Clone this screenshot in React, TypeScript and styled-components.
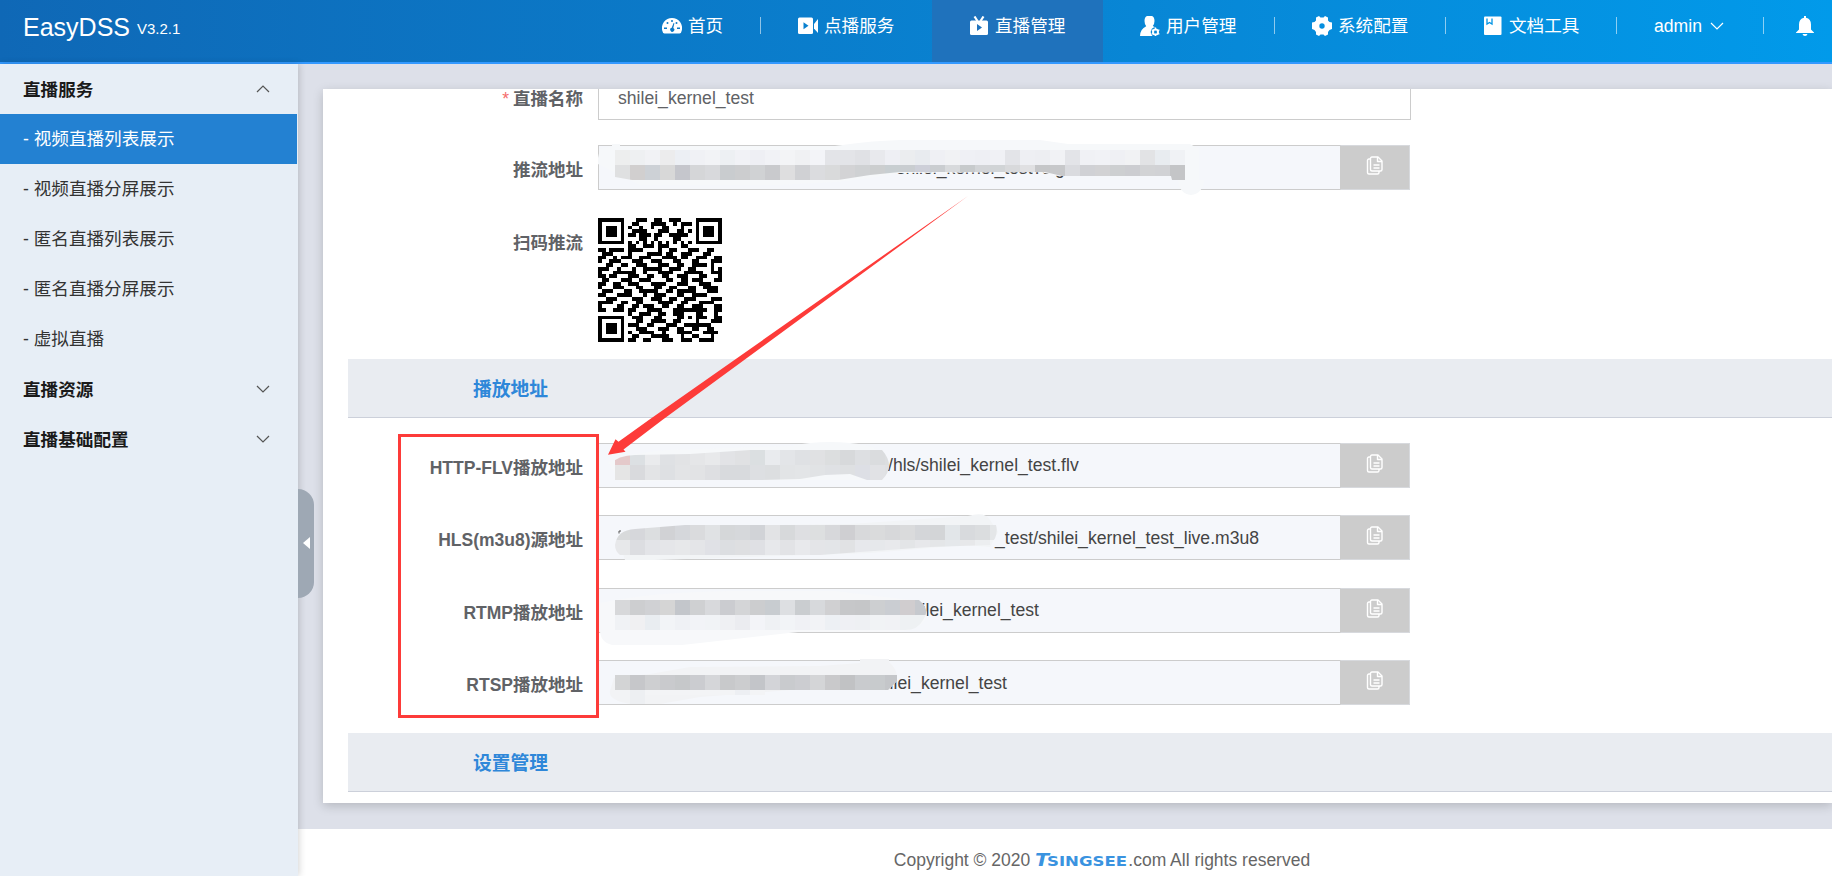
import React from 'react';
import styled, { createGlobalStyle } from 'styled-components';

const Global = createGlobalStyle`
  * { box-sizing: border-box; }
  html, body { margin: 0; height: 100%; overflow: hidden; }
  body {
    font-family: "Liberation Sans", "Noto Sans CJK SC", sans-serif;
    font-size: 17.6px;
    color: #333;
  }
`;

const Page = styled.div`
  position: relative;
  display: flex;
  flex-direction: column;
  height: 876px;
  overflow: hidden;
  background: #dde0e9;
`;

const Header = styled.header`
  display: flex;
  height: 64px;
  flex: none;
  color: #fff;
  background: linear-gradient(to right, #0f68b6, #0886d5 62%, #019aea);
  border-bottom: 2px solid #3399ff;
`;

const Brand = styled.div`
  display: flex;
  align-items: center;
  gap: 7px;
  height: 55px;
  padding-left: 23px;
  width: 625px;
  font-size: 25px;
`;

const Version = styled.span`
  padding-top: 1px;
  font-size: 15px;
`;

const Nav = styled.nav`
  display: flex;
`;

const NavItem = styled.div<{ $w: number; $active?: boolean; $pad?: number; $gap?: number }>`
  display: flex;
  align-items: center;
  gap: ${p => p.$gap ?? 6}px;
  width: ${p => p.$w}px;
  height: 62px;
  padding: 0 0 10px ${p => p.$pad ?? 37}px;
  background: ${p => (p.$active ? '#1f72bc' : 'transparent')};
  white-space: nowrap;
  line-height: 26px;
`;

const Divider = styled.i`
  width: 1px;
  height: 17px;
  margin: 17px 0 0 -1px;
  background: rgba(255, 255, 255, 0.55);
`;

const NavIcon = styled.svg`
  width: 20px;
  height: 20px;
  flex: none;
  fill: #fff;
`;

const Body = styled.div`
  display: flex;
  flex: 1;
  min-height: 0;
`;

const Sidebar = styled.aside`
  position: relative;
  z-index: 1;
  width: 298px;
  flex: none;
  background: #e7eef6;
  box-shadow: 1px 0 7px rgba(0, 0, 0, 0.18);
`;

const MenuTitle = styled.div`
  display: flex;
  align-items: center;
  justify-content: space-between;
  height: 50px;
  padding: 0 28px 1px 23px;
  font-weight: 700;
  color: #1a1a1a;
`;

const MenuItem = styled.div<{ $active?: boolean }>`
  height: 50px;
  width: 297px;
  padding-left: 23px;
  line-height: 51px;
  color: ${p => (p.$active ? '#fff' : '#333')};
  background: ${p => (p.$active ? '#2381d2' : 'transparent')};
`;

const Collapse = styled.div`
  position: absolute;
  left: 298px;
  top: 425px;
  display: flex;
  align-items: center;
  justify-content: center;
  width: 16px;
  height: 109px;
  padding-bottom: 2px;
  border-radius: 0 16px 16px 0;
  background: #9ea8b4;
`;

const Main = styled.main`
  display: flex;
  flex-direction: column;
  flex: 1;
  min-width: 0;
`;

const Card = styled.section`
  height: 714px;
  margin: 25px 0 26px 25px;
  padding-left: 25px;
  background: #fff;
  box-shadow: 0 3px 10px rgba(0, 0, 0, 0.18);
  flex: none;
`;

const Scroller = styled.div`
  display: flex;
  flex-direction: column;
  height: 714px;
  overflow: hidden;
`;

const FormRow = styled.div<{ $top: number; $h?: number }>`
  display: flex;
  flex: none;
  height: ${p => p.$h ?? 45}px;
  margin-top: ${p => p.$top}px;
`;

const Label = styled.label<{ $required?: boolean }>`
  width: 250px;
  padding-right: 15px;
  line-height: ${p => (p.$required ? 48 : 50)}px;
  text-align: right;
  font-size: 17.5px;
  font-weight: 700;
  color: #606266;
  white-space: nowrap;
  &::before {
    content: ${p => (p.$required ? '"*"' : 'none')};
    margin-right: 4px;
    font-weight: 400;
    color: #f56c6c;
  }
`;

const Input = styled.div<{ $readonly?: boolean; $indent?: number; $line?: number }>`
  width: ${p => (p.$readonly ? 742 : 813)}px;
  height: 45px;
  border: 1px solid #ccc;
  border-right-width: ${p => (p.$readonly ? 0 : 1)}px;
  padding-left: ${p => p.$indent ?? 19}px;
  line-height: ${p => p.$line ?? 45}px;
  color: ${p => (p.$readonly ? '#444' : '#606266')};
  background: ${p => (p.$readonly ? '#f5f7fb' : '#fff')};
  white-space: nowrap;
`;

const CopyButton = styled.div`
  display: flex;
  justify-content: center;
  width: 70px;
  height: 45px;
  padding-top: 10px;
  border: 1px solid #d7d9dd;
  border-left-color: #ccc;
  background: #ccc;
`;

const SectionTitle = styled.h3<{ $top: number }>`
  flex: none;
  height: 59px;
  margin: ${p => p.$top}px 0 0;
  padding-left: 125px;
  border-bottom: 1px solid #ccd0da;
  line-height: 61px;
  font-size: 18.8px;
  color: #2e87d9;
  background: #e9ecf1;
`;

const Footer = styled.footer`
  display: flex;
  align-items: center;
  justify-content: center;
  flex: 1;
  padding: 15px 0 0 74px;
  font-size: 17.5px;
  color: #666;
  background: #fff;
  white-space: nowrap;
`;

const Logo = styled.svg`
  width: 93px;
  height: 16px;
  margin: 0 0 1px 5px;
  overflow: visible;
`;

const Overlay = styled.svg`
  position: absolute;
  left: 0;
  top: 0;
  z-index: 2;
  pointer-events: none;
`;

const Chevron = ({ up, color = '#555' }: { up?: boolean; color?: string }) => (
  <svg width="14" height="8" viewBox="0 0 14 8" fill="none" stroke={color} strokeWidth="1.2">
    <path d={up ? 'M1 7l6-6 6 6' : 'M1 1l6 6 6-6'} />
  </svg>
);

const CopyIcon = () => (
  <svg width="18" height="20" viewBox="0 0 18 20" fill="none" stroke="#fff" strokeWidth="1.400" strokeLinejoin="round">
    <path d="M4.500 2.500Q4.500 1 6 1H12L16 5V13.500Q16 15 14.500 15H6Q4.500 15 4.500 13.500Z" />
    <path d="M11.500 1V5.500H16M7.500 9H13.500M7.500 12H13.500" />
    <path d="M4.500 3H3Q1.500 3 1.500 4.500V16.500Q1.500 18 3 18H11.500Q13 18 13 16.500V15" />
  </svg>
);

const GaugeIcon = () => (
  <NavIcon viewBox="0 0 20 20">
    <path d="M10 2a10 10 0 0 0-9.600 13Q.8 17.500 2.500 17.500H17.500Q19.200 17.500 19.600 15A10 10 0 0 0 10 2Z" />
    <g fill="#0b79c6">
      <circle cx="10" cy="5" r="1" /><circle cx="5.500" cy="7" r="1" /><circle cx="14.500" cy="7" r="1" />
      <rect x="2" y="11.500" width="3" height="1.500" /><rect x="15" y="11.500" width="3" height="1.500" />
      <path d="M11.600 7L12.400 7.300L11.300 12A2 2 0 1 1 9.700 11.800Z" />
    </g>
  </NavIcon>
);

const VideoIcon = () => (
  <NavIcon viewBox="0 0 20 20">
    <rect x="0" y="1.500" width="15" height="16.500" rx="1.500" />
    <path d="M16 8L20 3V17L16 12.500Z" />
    <path d="M5.500 6.200L10.500 9.700L5.500 13.200Z" fill="#0980cf" />
  </NavIcon>
);

const TvIcon = () => (
  <NavIcon viewBox="0 0 20 20">
    <rect x="1" y="4.500" width="18" height="14.500" rx="1.500" />
    <path d="M5.500 .5L8.500 5M14.500 .5L11.500 5" stroke="#fff" strokeWidth="2.200" />
    <path d="M8 8L13 11.500L8 15Z" fill="#1f72bc" />
  </NavIcon>
);

const UserIcon = () => (
  <NavIcon viewBox="0 0 20 20">
    <path d="M9.500 -.5Q14.500 -.5 14.500 5Q14.500 8 12.800 10Q16 11 17 14L15 20.500H0Q0 13 6.200 10.200Q4.500 8 4.500 5Q4.500 -.5 9.500 -.5Z" />
    <circle cx="15.500" cy="16" r="4.800" fill="#0787d6" />
    <circle cx="15.500" cy="16" r="2.600" fill="none" stroke="#fff" strokeWidth="1.800" />
    <path d="M15.500 11.500V20.500M11.600 13.700L19.400 18.300M11.600 18.300L19.400 13.700" stroke="#fff" strokeWidth="1.300" />
    <circle cx="15.500" cy="16" r="1.500" fill="#0787d6" />
  </NavIcon>
);

const GearIcon = () => (
  <NavIcon viewBox="0 0 20 20">
    <path d="M4 1.500L7 0L8.500 1.500H11.500L13 0L16 1.500V4.500L17.500 6L20 6.500V13L17.500 14L16 16V18.500L13 20L11.500 18.500H8.500L7 20L4 18.500V16L2.500 14L0 13V6.500L2.500 6L4 4.500Z" />
    <circle cx="10" cy="10" r="2.700" fill="#058fdf" />
  </NavIcon>
);

const BookIcon = () => (
  <NavIcon viewBox="0 0 20 20">
    <rect x="1" y=".5" width="17.500" height="18.500" rx="1" />
    <path d="M4 2.500V8L6.500 6.500L9 8V2.500" fill="none" stroke="#0394e4" strokeWidth="1.300" />
  </NavIcon>
);

const BellIcon = () => (
  <NavIcon viewBox="0 0 20 20">
    <path d="M9 0H11V1.800Q16 3 16 8.500V13.500L19 16.500V17H1V16.500L4 13.500V8.500Q4 3 9 1.800ZM7.500 18H12.500Q12 20 10 20Q8 20 7.500 18Z" />
  </NavIcon>
);

const QR_ROWS = [
  '111111100011100110011100001111111',
  '100000100110001111001011101000001',
  '101110101001001001100010001011101',
  '101110100111100011100110101011101',
  '101110101101110110011111001011101',
  '100000100001100100001100001000001',
  '111111101010101010101010101111111',
  '000000001100111011100011000000000',
  '110111101111000010011000111001100',
  '011100001000011110110011100011000',
  '110010111001110001111011001110011',
  '100111000111001110001100011000111',
  '001100110011100011100110011110100',
  '111001000100111110011100110000101',
  '100011111100100011110001111100111',
  '110110001110011001100111000110001',
  '011000111001110000110011011100011',
  '110011001110001111000111000111000',
  '100011100011000110011000110011110',
  '011100011001111100110111110001110',
  '110001111000100111000110011110000',
  '001110000111001110011001110000111',
  '111100110011000011110011000111100',
  '100001100110111001100110011100011',
  '110011101100011110001111111110011',
  '000000001001110011001110001100010',
  '111111100111000110000110101110011',
  '100000100011001111001100001000111',
  '101110101110011000111001111111000',
  '101110100011100011100110011001100',
  '101110101001111001000111100011110',
  '100000100110001111100010011000100',
  '111111101100110001110011100111100',
];

const QrCode = () => (
  <svg width="124" height="124" viewBox="0 0 33 33" shapeRendering="crispEdges">
    {QR_ROWS.map((row, y) =>
      row.split('').map((c, x) => (c === '1' ? <rect key={`${x}-${y}`} x={x} y={y} width="1" height="1" /> : null))
    )}
  </svg>
);

type MosaicProps = { id: string; wash: string; washColor?: string; clip: string; rows: { y: number; colors: string }[] };

const Mosaic = ({ id, wash, washColor = '#f6f8fa', clip, rows }: MosaicProps) => (
  <g>
    <path d={wash} fill={washColor} />
    <clipPath id={id}><path d={clip} /></clipPath>
    <g clipPath={`url(#${id})`} shapeRendering="crispEdges">
      {rows.map(r =>
        r.colors.split(' ').map((c, i) => (
          <rect key={`${r.y}-${i}`} x={615 + i * 15} y={r.y} width="15" height="15" fill={`#${c}`} />
        ))
      )}
    </g>
  </g>
);

const Mosaics = () => (
  <>
    <Mosaic
      id="m-push"
      wash="M600 149L612 146V144H620V146H835L850 144Q870 141 900 140H1040L1068 144H1190L1199 149V180H1204A13 15 0 0 1 1178 180L1171 176H1058L1040 172L900 173L870 178L835 182L780 185H640L598 164V158Z"
      clip="M615 150H1185V180H1172L1171 176H1062L1045 172H900L870 175L838 180H632L615 177Z"
      rows={[
        { y: 150, colors: 'edeeee eef0f2 f1f2f5 ececed eceff4 f0f1f5 f2f3f6 edf0f3 f1f2f6 eeeff4 f1f2f6 f3f4f6 f0f1f3 f3f4f8 e3e4e8 e3e4e8 e0e1e5 e8e9ed eeeff4 ebedef e8ebef eff0f4 f1f2f4 eff0f5 eeeff4 f0f1f5 e3e4e8 eeeff3 edeef2 f1f2f5 e3e4e8 f0f1f5 f1f2f6 eff0f4 f1f2f4 e2e3e5 e8ecf0 f0f2f5' },
        { y: 165, colors: 'dfe0e1 d1cfcf cdd1d6 d8d8d8 c5c6cc d5d6d8 d8d9dc c9cccf cccdcf d0d2d4 c9cacd dededf d0d1d4 dbdcdf d9dadb d3d3d5 cfd1d3 cccecf c8ced1 c9cdd0 cdcfd8 cacdd0 d8dadc c7cacc d2d4d7 d1d4d6 d8d9db e0e0e2 c5c6c8 c7c8ca dadbdf d0d1d5 d2d2d4 cdcfd1 cccdd1 d2d3d5 d1d2d5 c4c5c7' },
      ]}
    />
    <Mosaic
      id="m-flv"
      wash="M608 462Q640 449 700 449L790 446Q820 440 850 443Q887 446 887 466Q887 481 870 480H700L620 482Z"
      clip="M609 465Q618 455 635 455L690 454L750 450H882Q896 466 882 480H867L850 474L825 475L800 479L760 480H615V465Z"
      rows={[
        { y: 450, colors: 'e4c9ca dce0e3 eaebed dfe1e4 e2e3e5 e5e6e8 e8e9eb e2e3e6 e0e1e3 dbdfe1 e9ebee e3e5e8 dfe1e4 e0e1e3 dcdedf d7d9db dddfe2 dadcde dcdee0' },
        { y: 465, colors: 'e5e5e5 d9dadd e3e4e6 dee0e3 e3e4e6 e2e3e5 dedfe2 d8dadd d8dadd dddfe2 dcdee0 e2e4e6 e3e5e7 e1e3e5 dfe1e4 dee0e2 dddfe5 e1e2e5 dfe1e3' },
      ]}
    />
    <path d="M619 533.500V531H621" fill="none" stroke="#555" />
    <Mosaic
      id="m-hls"
      wash="M618 540Q620 528 700 526L850 524L968 516Q985 511 990 520L998 532L990 547L965 545L870 553L655 560H625Z"
      washColor="#f2f4f6"
      clip="M615 545Q617 530 635 529L685 525H996Q999 536 990 545L930 547L860 552L820 555H620Q615 551 615 545Z"
      rows={[
        { y: 525, colors: 'd8dadb d6d7db dcdee0 d1d2d5 d5d7db dadbdd e0e2e4 d5d7d9 d6d8db d1d3d7 e2e3e5 d7d9db dedfe2 dddfe0 d7d8db cfcfd2 d8d9db dadbdc d7d8da dadbdc d4d6d9 d3d5d7 e2e6e9 d8dadd dbdddf e4e6e8' },
        { y: 540, colors: 'e7e8ea dcdde1 e3e4e8 e5e6e9 e7e8ea e4e5e8 e0e1e6 dcdee1 dedfe1 dfe0e4 e7e8eb e2e3e6 e8e9ec e4e5e8 e3e5e8 e1e2e4 e7e8ec e6e8eb e8e9ec e3e5e7 e7e8eb e4e6e8 e5e8eb e7e8ea eceef0' },
      ]}
    />
    <Mosaic
      id="m-rtmp"
      wash="M600 603Q650 592 730 591H835L910 600Q930 605 926 618Q920 631 890 632L798 632L682 645H612Q600 642 600 630Z"
      washColor="#f7f8fa"
      clip="M615 600H919Q931 610 923 620Q918 630 905 630H615Z"
      rows={[
        { y: 600, colors: 'd7d8da cdced0 d0d1d4 d5d5d5 c3c6cb cfd0d2 d8d9dc cbccd0 d4d5d7 cccdcf c8ccd0 dddfe2 cacdd0 d7d9dc d0d0d2 c6c7c9 c5c6c8 cdcfd1 cacdd2 d0cdcf c6c9ce' },
        { y: 615, colors: 'f0f2f5 f0f0f2 e9edf1 f2f4f7 eff1f5 f2f3f7 f1f3f6 eff0f3 ebecf0 f3f4f8 eff1f4 f2f4f7 f0f1f5 f2f3f6 edf0f4 eff0f4 eef0f3 f1f3f5 f1f2f5 eef1f3 eef1f3' },
      ]}
    />
    <Mosaic
      id="m-rtsp"
      wash="M614 678L650 674L690 667L820 666L860 663V659H889V662Q896 668 897 676V681L888 690H790L700 697L660 704H630Q608 700 610 691Z"
      washColor="#f2f3f5"
      clip="M615 675H897V681L888 690H765V695H645V704H630V690H615Z"
      rows={[
        { y: 675, colors: 'd3d4d5 c6c7ca cecfd1 c9cacd c6c8ca cbccd0 d5d6d9 c8c9cb cccdcf c3c5c9 d3d4d8 c9cbce cccdd1 d4d5d7 c9c9cb c1c2c4 c9cbce c8cbcd c4c6c9' },
        { y: 690, colors: 'f3f4f6 edeff2 f3f4f6 f3f4f6 f3f4f6 f3f4f6 f3f4f6 f3f4f6 edeff3 f3f4f6' },
      ]}
    />
  </>
);

const Annotations = () => (
  <Overlay width="1832" height="876" viewBox="0 0 1832 876">
    <Mosaics />
    <rect x="399.500" y="435.500" width="198" height="281" fill="none" stroke="#fd3b39" strokeWidth="3" />
    <path d="M968 196L648.800 420L618.500 441.700L615.500 439.300L608 454.700L625.500 451.700L623.500 449.500L662.300 420Z" fill="#fd3b39" />
  </Overlay>
);

const CopyField = ({ indent, line, children }: { indent: number; line?: number; children: React.ReactNode }) => (
  <>
    <Input $readonly $indent={indent} $line={line}>{children}</Input>
    <CopyButton><CopyIcon /></CopyButton>
  </>
);

const NAV = [
  { text: '首页', icon: <GaugeIcon />, w: 136, line: true },
  { text: '点播服务', icon: <VideoIcon />, w: 171 },
  { text: '直播管理', icon: <TvIcon />, w: 171, active: true },
  { text: '用户管理', icon: <UserIcon />, w: 172, line: true },
  { text: '系统配置', icon: <GearIcon />, w: 171, line: true },
  { text: '文档工具', icon: <BookIcon />, w: 171, line: true },
];

const PLAY_ROWS = [
  { label: 'HTTP-FLV播放地址', value: '/hls/shilei_kernel_test.flv', indent: 289, top: 25, line: 43 },
  { label: 'HLS(m3u8)源地址', value: '_test/shilei_kernel_test_live.m3u8', indent: 396, top: 27, line: 45 },
  { label: 'RTMP播放地址', value: 'shilei_kernel_test', indent: 304, top: 28, line: 43 },
  { label: 'RTSP播放地址', value: 'shilei_kernel_test', indent: 272, top: 27, line: 45 },
];

export default function App() {
  return (
    <Page>
      <Global />
      <Header>
        <Brand>EasyDSS <Version>V3.2.1</Version></Brand>
        <Nav>
          {NAV.map(n => (
            <React.Fragment key={n.text}>
              <NavItem $w={n.w} $active={n.active}>{n.icon}<span>{n.text}</span></NavItem>
              {n.line && <Divider />}
            </React.Fragment>
          ))}
          <NavItem $w={147} $gap={8}><span>admin</span><Chevron color="#fff" /></NavItem>
          <Divider />
          <NavItem $w={68} $pad={31}><BellIcon /></NavItem>
        </Nav>
      </Header>
      <Body>
        <Sidebar>
          <MenuTitle>直播服务<Chevron up /></MenuTitle>
          <MenuItem $active>- 视频直播列表展示</MenuItem>
          <MenuItem>- 视频直播分屏展示</MenuItem>
          <MenuItem>- 匿名直播列表展示</MenuItem>
          <MenuItem>- 匿名直播分屏展示</MenuItem>
          <MenuItem>- 虚拟直播</MenuItem>
          <MenuTitle>直播资源<Chevron /></MenuTitle>
          <MenuTitle>直播基础配置<Chevron /></MenuTitle>
          <Collapse>
            <svg width="7" height="12" viewBox="0 0 7 12"><path d="M7 0V12L0 6Z" fill="#fff" /></svg>
          </Collapse>
        </Sidebar>
        <Main>
          <Card>
            <Scroller>
              <FormRow $top={-14}>
                <Label $required>直播名称</Label>
                <Input>shilei_kernel_test</Input>
              </FormRow>
              <FormRow $top={25}>
                <Label>推流地址</Label>
                <CopyField indent={280}>ls/shilei_kernel_test?sign</CopyField>
              </FormRow>
              <FormRow $top={28} $h={124}>
                <Label>扫码推流</Label>
                <QrCode />
              </FormRow>
              <SectionTitle $top={17}>播放地址</SectionTitle>
              {PLAY_ROWS.map(r => (
                <FormRow key={r.label} $top={r.top}>
                  <Label>{r.label}</Label>
                  <CopyField indent={r.indent} line={r.line}>{r.value}</CopyField>
                </FormRow>
              ))}
              <SectionTitle $top={28}>设置管理</SectionTitle>
            </Scroller>
          </Card>
          <Footer>
            <span>Copyright © 2020</span>
            <Logo viewBox="0 0 93 16">
              <text x="0" y="14" textLength="14" lengthAdjust="spacingAndGlyphs" fontFamily="DejaVu Sans" fontWeight="700" fontStyle="italic" fontSize="17" fill="#3a93e0">T</text>
              <text x="12" y="14" textLength="80" lengthAdjust="spacingAndGlyphs" fontFamily="DejaVu Sans" fontWeight="700" fontSize="14" fill="#3a93e0">SINGSEE</text>
            </Logo>
            <span>.com All rights reserved</span>
          </Footer>
        </Main>
      </Body>
      <Annotations />
    </Page>
  );
}
